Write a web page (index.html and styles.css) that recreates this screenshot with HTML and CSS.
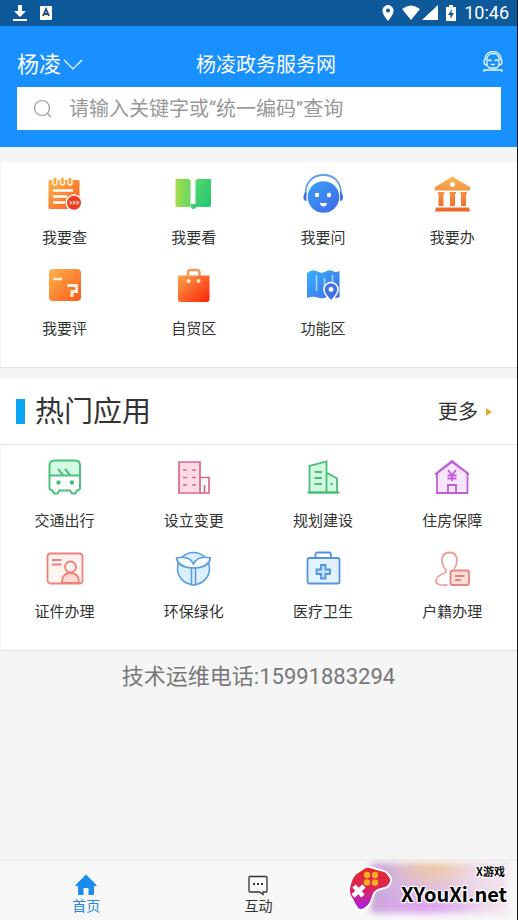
FILE: index.html
```html
<!doctype html>
<html lang="zh-CN">

<head>
    <meta charset="utf-8" />
    <meta name="viewport" content="width=device-width, initial-scale=1.0">
    <title>杨凌政务服务网</title>
    <link rel="stylesheet" href="styles.css">
</head>

<body>

    <!-- shared gradients -->
    <svg class="defs" width="0" height="0" aria-hidden="true">
        <defs>
            <linearGradient id="orange" x1="0" y1="0" x2="1" y2="1"><stop offset="0" stop-color="#fdb44b" /><stop offset="1" stop-color="#fb5a1c" /></linearGradient>
            <linearGradient id="gold" x1="0" y1="0" x2="0" y2="1"><stop offset="0" stop-color="#fab558" /><stop offset="1" stop-color="#ee6526" /></linearGradient>
            <linearGradient id="red" x1="0" y1="0" x2="1" y2="1"><stop offset="0" stop-color="#fda347" /><stop offset="1" stop-color="#fb2208" /></linearGradient>
            <linearGradient id="lime" x1="0" y1="0" x2="1" y2="0"><stop offset="0" stop-color="#a6dc4c" /><stop offset="1" stop-color="#67d760" /></linearGradient>
            <linearGradient id="green" x1="0" y1="0" x2="1" y2="1"><stop offset="0" stop-color="#5dd968" /><stop offset="1" stop-color="#1fc573" /></linearGradient>
            <linearGradient id="blue" x1="0" y1="0" x2="1" y2="1"><stop offset="0" stop-color="#39a1f6" /><stop offset="1" stop-color="#3f66e8" /></linearGradient>
            <linearGradient id="sky" x1="0" y1="0" x2="1" y2="1"><stop offset="0" stop-color="#37b2fb" /><stop offset="1" stop-color="#4168ee" /></linearGradient>
            <linearGradient id="pad" x1="0" y1="0" x2="0" y2="1"><stop offset="0" stop-color="#e52b24" /><stop offset=".5" stop-color="#d92558" /><stop offset="1" stop-color="#a81ef0" /></linearGradient>
        </defs>
    </svg>

    <div class="main">

        <div class="status">
            <div class="side">
                <svg width="14" height="18" viewBox="0 0 14 18"><path d="M5 1h4v6h4l-6 6-6-6h4zM0 15h14v2H0z" fill="#fff" /></svg>
                <svg width="12" height="14" viewBox="0 0 12 14"><rect width="12" height="14" rx="1" fill="#fff" /><path d="M3 10 6 3l3 7M4 8h4" fill="none" stroke="#1c4b73" stroke-width="1.8" /></svg>
            </div>
            <div class="side">
                <svg width="12" height="16" viewBox="0 0 12 16"><path fill-rule="evenodd" d="M6 0a5.6 5.6 0 0 0-5.6 5.6C.4 9.800 6 16 6 16s5.600-6.200 5.600-10.400A5.600 5.600 0 0 0 6 0zm0 3.600a2 2 0 1 1 0 4 2 2 0 0 1 0-4z" fill="#fff" /></svg>
                <svg width="36" height="16" viewBox="0 0 36 16"><path d="M0 4Q9-3 18 4L9 15zM36 0v15H20z" fill="#fff" /></svg>
                <svg width="10" height="16" viewBox="0 0 10 16"><path fill-rule="evenodd" d="M3 0h4v2h3v14H0V2h3zM6 4 2 10h2.500v4L8 8H5.500z" fill="#fff" /></svg>
                <span class="time">10:46</span>
            </div>
        </div>

        <header class="header">
            <div class="bar">
                <button class="city">杨凌<svg width="20" height="12" viewBox="0 0 20 12"><path d="M1 1l9 9 9-9" fill="none" stroke="#fff" stroke-width="1.200" /></svg></button>
                <h1 class="title">杨凌政务服务网</h1>
                <button class="service" aria-label="客服">
                    <svg width="20" height="22" viewBox="0 0 20 22" fill="none" stroke="#e8f6ff" stroke-width="1.300"><path d="M2 8a8 7.500 0 0 1 16 0M4 8a6 5.500 0 0 1 12 0v5q-1 4-3 4H7q-2 0-3-4zM3 8Q1 8 1 11t3 3M17 8q2 0 2 3t-3 3M5 10q1.500-2 3.500 0M11.500 10q2-2 3.500 0M8 13.500h4M1 21v-2h18v2" /></svg>
                </button>
            </div>
            <form class="search">
                <svg width="20" height="20" viewBox="0 0 20 20"><g fill="none" stroke="#999" stroke-width="1.200"><circle cx="9" cy="9" r="7.500" /><path d="M14.500 14.500 18 18" /></g></svg>
                <input type="text" aria-label="搜索" placeholder="请输入关键字或“统一编码”查询">
            </form>
        </header>

        <nav class="grid" aria-label="服务">
            <a class="item" href="#">
                <svg width="40" height="40" viewBox="0 0 40 40">
                    <rect x="4.500" y="6" width="31" height="29" rx="1.500" fill="url(#orange)" />
                    <g fill="#f5a348" stroke="#fff6dc" stroke-width="1.400"><rect x="9" y="3" width="4" height="8" rx="2" /><rect x="16.500" y="3" width="4" height="8" rx="2" /><rect x="24" y="3" width="4" height="8" rx="2" /></g>
                    <path d="M9 16.500h20M9 22.500h14M9 28.500h12" stroke="#fff" stroke-width="2.400" />
                    <circle cx="30" cy="28.700" r="7.800" fill="#ee3b20" stroke="#fff" stroke-width="1.500" />
                    <path d="M25.500 27l2 1.700-2 1.700M29 27l2 1.700-2 1.700M32.500 27l2 1.700-2 1.700" fill="none" stroke="#ffd7c5" stroke-width="1.300" />
                </svg>
                <span>我要查</span>
            </a>
            <a class="item" href="#">
                <svg width="40" height="40" viewBox="0 0 40 40">
                    <path d="M2.500 5H15q2.500 0 2.500 3v23q0 2-2 2h-11q-2 0-2-2z" fill="url(#lime)" />
                    <path d="M38 5H25q-2.500 0-2.500 3v22h-5v3q1 2 3 2t3-2H36q2 0 2-2z" fill="url(#green)" />
                </svg>
                <span>我要看</span>
            </a>
            <a class="item" href="#">
                <svg width="40" height="40" viewBox="0 0 40 40">
                    <path d="M2.500 21C2 8 10 1 20.500 1s18 7 17.500 20" fill="none" stroke="#5da3ec" stroke-width="1.800" />
                    <path d="M3.500 18v9Q0 27 .5 22.500T3.500 18zM37 18v9q3.500 0 3-4.500T37 18z" fill="#3e76e0" />
                    <circle cx="20.500" cy="23" r="15.800" fill="url(#blue)" />
                    <g fill="#fff"><circle cx="14" cy="21" r="2.200" /><circle cx="26" cy="21" r="2.200" /><path d="M17 29h7q-.5 3.500-3.500 3.500T17 29z" /></g>
                </svg>
                <span>我要问</span>
            </a>
            <a class="item" href="#">
                <svg width="40" height="40" viewBox="0 0 40 40">
                    <path fill-rule="evenodd" d="M20.500 2.500 38 13v3.500H3V13zm0 5.500a2.500 2.500 0 1 0 0 5 2.500 2.500 0 0 0 0-5zM6 18h6.500v2h-1v12h-5V20H6zM17.500 18H24v2h-1v12h-5V20h-.5zM28.500 18H35v2h-1v12h-5V20h-.5zM4 33.500h33l1 4H3z" fill="url(#gold)" />
                </svg>
                <span>我要办</span>
            </a>
            <a class="item" href="#">
                <svg width="40" height="40" viewBox="0 0 40 40">
                    <rect x="5" y="4" width="32" height="32" rx="4" fill="url(#orange)" />
                    <path d="M9.500 14H18" stroke="#fff3df" stroke-width="2.400" />
                    <path d="M23.500 20.500h9v6H28V32" fill="none" stroke="#fff3df" stroke-width="2.800" />
                </svg>
                <span>我要评</span>
            </a>
            <a class="item" href="#">
                <svg width="40" height="40" viewBox="0 0 40 40">
                    <path d="M15 11V7.500Q15 5 17.500 5H24q2.500 0 2.500 2.500V11" fill="none" stroke="#f39a5c" stroke-width="2.600" />
                    <path d="M5 10.500h31.500V34q0 3-3 3H8q-3 0-3-3z" fill="url(#red)" />
                    <circle cx="15.500" cy="16" r="2" fill="#ffe9cc" /><circle cx="25.500" cy="16" r="2" fill="#ffe0d0" />
                </svg>
                <span>自贸区</span>
            </a>
            <a class="item" href="#">
                <svg width="40" height="40" viewBox="0 0 40 40">
                    <path d="M4 8q5-4 9.500-2 4.500 3 8 1 5-3 8-1 3 2 7 0v26q-4 2-7 0-4-1-8 1-4 1-8-1-5-1-9.500 1z" fill="url(#sky)" />
                    <path d="M13.500 10v16M21.500 13v13M29.500 10v8" stroke="#a8d8ff" stroke-width="1.500" />
                    <path d="M28 36q-7-7-7-11.500a7 7 0 0 1 14 0Q35 29 28 36z" fill="#4272e8" stroke="#fff" stroke-width="1.500" />
                    <circle cx="28" cy="24.500" r="2.400" fill="#fff" />
                </svg>
                <span>功能区</span>
            </a>
        </nav>

        <section class="hot">
            <div class="head">
                <h2>热门应用</h2>
                <a class="more" href="#">更多<svg width="6" height="8" viewBox="0 0 6 8"><path d="M0 0l6 4-6 4z" fill="#e3a92f" /></svg></a>
            </div>
            <div class="grid">
                <a class="item" href="#">
                    <svg width="40" height="40" viewBox="0 0 40 40" fill="none" stroke="#4cc07c" stroke-width="2">
                        <path d="M5.500 18.500V8.500q0-5 5-5H31q5 0 5 5v10z" fill="#d3fbe2" />
                        <path d="M5.500 18.500V31q0 2 3 2.500l1.500 3h3.500l2-3h10.500l2 3h3.500l1.500-3Q36 33 36 31V18.500M14 12l5 6M21 12l5 6" />
                        <circle cx="14.500" cy="25.500" r="1.200" fill="#35a966" /><circle cx="28" cy="25.500" r="1.200" fill="#35a966" />
                    </svg>
                    <span>交通出行</span>
                </a>
                <a class="item" href="#">
                    <svg width="40" height="40" viewBox="0 0 40 40" fill="none" stroke="#dd6688" stroke-width="1.700">
                        <path d="M6 5h21v31H6z" fill="#ffdce5" />
                        <path d="M27 20.500h9V36h-9M31.500 36v-8M10 13h4M19 13h4M10 20.500h4M19 20.500h4M10 28h4M19 28h4" />
                    </svg>
                    <span>设立变更</span>
                </a>
                <a class="item" href="#">
                    <svg width="40" height="40" viewBox="0 0 40 40" fill="none" stroke="#46bd78" stroke-width="1.800">
                        <path d="M6.500 35.500V9l17-4.500v31zM23.500 15.500l10.500 6v14H23.500z" fill="#d3f8df" />
                        <path d="M4.500 35.500H36.500M11.500 15H19M11.500 21H19M11.500 27H19M27.500 27h2.500" />
                    </svg>
                    <span>规划建设</span>
                </a>
                <a class="item" href="#">
                    <svg width="40" height="40" viewBox="0 0 40 40" fill="none" stroke="#bd60d8" stroke-width="1.800">
                        <path d="M5 36V16L20 5l15.500 11v20z" fill="#f8e5ff" />
                        <path d="M3 17.500 20 4l17 13.500M16 36v-8h8v8M16 13l4 5 4-5M15.500 18.500h9M15.500 21.500h9M20 18v6" />
                    </svg>
                    <span>住房保障</span>
                </a>
                <a class="item" href="#">
                    <svg width="40" height="40" viewBox="0 0 40 40" fill="none" stroke="#ef8178" stroke-width="1.800">
                        <rect x="3.500" y="5.500" width="35" height="30" rx="3" fill="#fff3f0" />
                        <path d="M8 12h9.500M8 16.500h9.500" />
                        <path d="M18 35q0-10 8.500-10T35 35z" fill="#ffd9d2" />
                        <circle cx="26.500" cy="19" r="5.500" fill="#fff3f0" />
                    </svg>
                    <span>证件办理</span>
                </a>
                <a class="item" href="#">
                    <svg width="40" height="40" viewBox="0 0 40 40" fill="none" stroke="#599ce0" stroke-width="1.600">
                        <circle cx="20.500" cy="20.500" r="16" fill="#dcefff" />
                        <path d="M3.500 10Q16 7 20.500 16 25 7 37.500 10 36 19 22.500 20h-4Q5 19 3.500 10z" fill="#f7fbff" />
                        <path d="M18.500 20h4v17h-4z" fill="#e3f1ff" />
                    </svg>
                    <span>环保绿化</span>
                </a>
                <a class="item" href="#">
                    <svg width="40" height="40" viewBox="0 0 40 40" fill="none" stroke="#5494df" stroke-width="1.800">
                        <path d="M12.500 10V6.500q0-2 2-2H26q2 0 2 2V10" />
                        <rect x="4.500" y="10" width="32" height="25.500" rx="2" fill="#e2f2ff" />
                        <path d="M18 17h4.500v4.500H27V26h-4.500v4.500H18V26h-4.500v-4.500H18z" fill="#c1e0ff" />
                    </svg>
                    <span>医疗卫生</span>
                </a>
                <a class="item" href="#">
                    <svg width="40" height="40" viewBox="0 0 40 40" fill="none" stroke="#eda099" stroke-width="1.800">
                        <path d="M15.500 37Q4 38 4 33q0-5 9-8 2-1 0-4-3-4-3-8 0-8.500 7.500-8.500T25 13q0 4-3 8" />
                        <rect x="18.500" y="22.500" width="18.500" height="14.500" rx="2" fill="#ffdeda" stroke="#e58580" />
                        <path d="M23 28h9.500M23 32h6" stroke="#e58580" />
                    </svg>
                    <span>户籍办理</span>
                </a>
            </div>
        </section>

        <p class="phone">技术运维电话:15991883294</p>

        <nav class="tabs" aria-label="导航">
            <a class="tab active" href="#">
                <svg width="22" height="22" viewBox="0 0 22 22"><path d="M11 .5 21.500 11v1H19v8q0 1-1 1h-4.500v-7h-5v7H4q-1 0-1-1v-8H.5v-1z" fill="#1b8bee" /></svg>
                <span>首页</span>
            </a>
            <a class="tab" href="#">
                <svg width="22" height="22" viewBox="0 0 22 22"><path d="M3 2.500h16q1 0 1 1V17q0 1-1 1h-3v2.500L12.500 18H3q-1 0-1-1V3.500q0-1 1-1z" fill="none" stroke="#333" stroke-width="1.300" /><path d="M6 9h2v2H6zM10 9h2v2h-2zM14 9h2v2h-2z" fill="#333" /></svg>
                <span>互动</span>
            </a>
            <div class="mark">
                <svg class="gamepad" width="46" height="48" viewBox="0 0 46 48">
                    <path d="M2 24Q3 15 8 9l9-6q2-2 6-1l10 3q6 1 8 4 5 5 2 10-2 4-9 5-6 1-8 7-2 8-6 11-5 5-9 2-3-3-6-10-4-5-3-10z" fill="url(#pad)" stroke="#fff" stroke-width="2" />
                    <g fill="#ffad22"><circle cx="20" cy="10" r="3.200" /><circle cx="28" cy="10" r="3.200" /><circle cx="20" cy="17.500" r="3.200" /><circle cx="28" cy="17.500" r="3.200" /></g>
                    <path d="M7 21l9 10M17 21 6 31" stroke="#fff" stroke-width="4.500" />
                </svg>
                <div class="words">
                    <span class="small">X游戏</span>
                    <span class="big">XYouXi.net</span>
                </div>
            </div>
        </nav>

    </div>

</body>

</html>
```
FILE: styles.css
```css
html,
body {
    margin: 0;
    min-height: 100%;
    font-family: Roboto, "Noto Sans CJK SC", sans-serif;
    color: #333;
}

* {
    box-sizing: border-box;
}

a {
    color: inherit;
    text-decoration: none;
}

button {
    padding: 0;
    border: 0;
    background: none;
    color: inherit;
    font-family: inherit;
}

svg {
    display: block;
    flex-shrink: 0;
}

.defs {
    position: absolute;
}

.main {
    display: flex;
    flex-direction: column;
    min-height: 100vh;
    background-color: #f5f5f5;
    border-right: 1px solid #111;
}

.status {
    display: flex;
    justify-content: space-between;
    align-items: center;
    height: 26px;
    padding: 0 8px 0 13px;
    background-color: #0e5999;
    color: white;
}

.status .side {
    display: flex;
    align-items: center;
    gap: 8px;
}

.status .side:first-child {
    gap: 13px;
}

.status .time {
    font-size: 18px;
    line-height: 26px;
}

.header {
    padding: 16px 16px 17px 17px;
    background-color: #1890ff;
    color: white;
}

.header .bar {
    display: grid;
    grid-template-columns: 1fr auto 1fr;
    align-items: center;
    height: 45px;
}

.header .city {
    display: flex;
    align-items: center;
    justify-self: start;
    gap: 2px;
    font-size: 22px;
    line-height: 30px;
}

.header .title {
    margin: 0;
    padding-left: 14px;
    font-size: 20px;
    font-weight: normal;
    line-height: 30px;
}

.header .service {
    justify-self: end;
    padding: 0 0 6px;
    margin-right: -2px;
}

.search {
    display: flex;
    align-items: center;
    gap: 16px;
    height: 43px;
    padding: 0 16px;
    background-color: white;
}

.search input {
    flex-grow: 1;
    min-width: 0;
    padding: 0;
    border: 0;
    outline: 0;
    font-family: inherit;
    font-size: 20px;
    line-height: 30px;
}

.search input::placeholder {
    color: #999;
    opacity: 1;
}

.grid {
    display: grid;
    grid-template-columns: repeat(4, 1fr);
    row-gap: 17px;
    padding: 12px 0 28px;
    background-color: white;
    border-bottom: 1px solid #e2e2e2;
    box-shadow: inset 1px 0 #f2f2f2;
}

.main > .grid {
    margin-top: 15px;
}

.item {
    display: flex;
    flex-direction: column;
    align-items: center;
    gap: 14px;
    font-size: 15px;
    line-height: 20px;
}

.item svg {
    margin-right: 1px;
}

.hot {
    margin-top: 11px;
}

.hot .head {
    display: flex;
    justify-content: space-between;
    align-items: center;
    height: 66px;
    padding: 0 25px 0 16px;
    background-color: white;
    border-bottom: 1px solid #e2e2e2;
}

.hot h2 {
    display: flex;
    align-items: center;
    gap: 10px;
    margin: 0;
    font-size: 29px;
    font-weight: normal;
    line-height: 40px;
}

.hot h2::before {
    content: '';
    width: 9px;
    height: 25px;
    background-color: #0aa5f5;
}

.hot .more {
    display: flex;
    align-items: center;
    gap: 8px;
    font-size: 20px;
    line-height: 30px;
}

.phone {
    margin: 10px 0;
    text-align: center;
    font-size: 22px;
    line-height: 32px;
    color: #777;
}

.tabs {
    position: relative;
    display: grid;
    grid-template-columns: repeat(3, 1fr);
    height: 60px;
    margin-top: auto;
    background-color: #f7f7f7;
    border-top: 1px solid #eee;
}

.tab {
    display: flex;
    flex-direction: column;
    align-items: center;
    padding-top: 13px;
    font-size: 14px;
    line-height: 20px;
}

.tab.active {
    color: #2387dc;
}

/* site badge over the right end of the tab bar */
.mark {
    position: absolute;
    right: 10px;
    bottom: 7px;
    display: flex;
    align-items: flex-end;
    gap: 8px;
    color: black;
}

.mark::before {
    content: '';
    position: absolute;
    top: 0;
    right: 0;
    bottom: 0;
    left: 24px;
    background: radial-gradient(ellipse at 45% 0, #f0c68acc, transparent 45%), radial-gradient(ellipse at 40% 100%, #dc9df0, transparent 55%), linear-gradient(90deg, #c5a5d6, #e5cfea 50%, #f3e3ee);
    filter: blur(3px);
}

.mark .gamepad,
.mark .words {
    position: relative;
}

.mark .words {
    display: flex;
    flex-direction: column;
    padding-bottom: 4px;
    font-family: "Noto Sans CJK SC", sans-serif;
    font-weight: bold;
    text-shadow: 1px 1px 1px white, -1px -1px 1px white, 1px -1px 1px white, -1px 1px 1px white, 0 0 3px white;
}

.mark .small {
    padding-right: 2px;
    text-align: right;
    font-size: 11px;
    line-height: 16px;
}

.mark .big {
    font-size: 20px;
    line-height: 30px;
}
```
